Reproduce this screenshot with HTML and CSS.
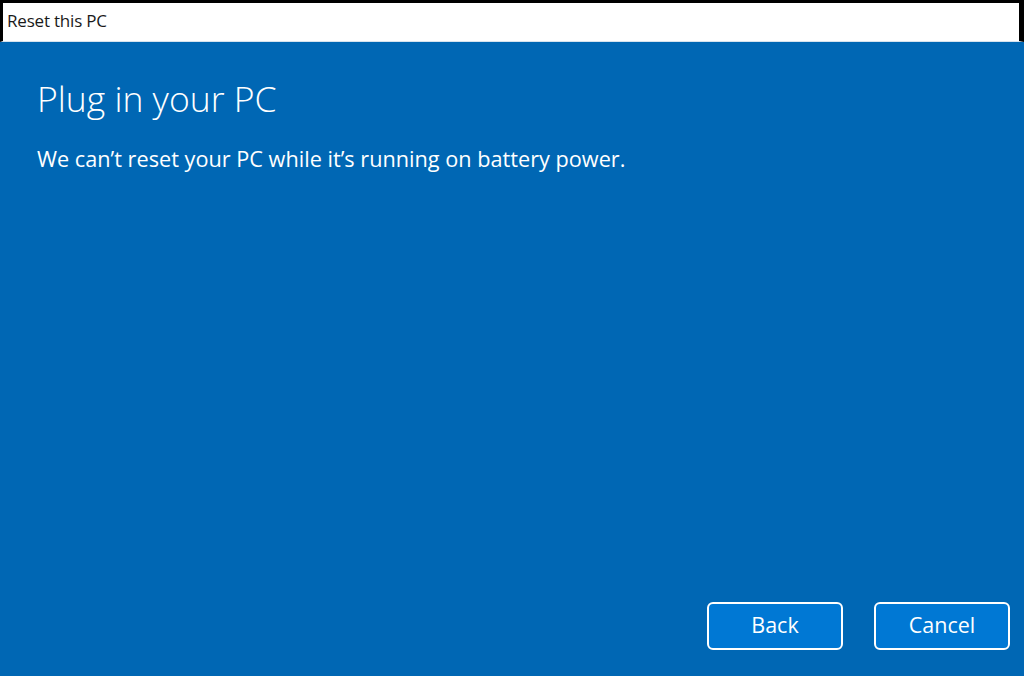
FILE: index.html
```html
<!DOCTYPE html>
<html lang="en">
<head>
<meta charset="utf-8">
<title>Reset this PC</title>
<link rel="stylesheet" href="styles.css">
</head>
<body>
<div class="window">
  <div class="titlebar"><span class="title-text">Reset this PC</span></div>
  <div class="content">
    <h1 class="heading">Plug in your PC</h1>
    <p class="message">We can’t reset your PC while it’s running on battery power.</p>
    <div class="spacer"></div>
    <div class="actions">
      <button class="btn">Back</button>
      <button class="btn">Cancel</button>
    </div>
  </div>
</div>
</body>
</html>
```
FILE: styles.css
```css
html, body {
  margin: 0;
  padding: 0;
  width: 1024px;
  height: 676px;
  overflow: hidden;
  background: #0067b4;
  font-family: "Open Sans", "Noto Sans", "Liberation Sans", sans-serif;
}
.window {
  display: flex;
  flex-direction: column;
  height: 676px;
}
.titlebar {
  height: 38px;
  background: #ffffff;
  border-top: 3px solid #000;
  border-left: 3px solid #000;
  border-right: 5px solid #000;
  border-bottom: 1px solid #d6e3ee;
  display: flex;
  align-items: center;
  padding-left: 4px;
  box-sizing: content-box;
}
.title-text {
  font-size: 17px;
  color: #1a1a1a;
  margin-top: -4px;
  letter-spacing: -0.2px;
}
.content {
  flex: 1;
  display: flex;
  flex-direction: column;
  padding: 0 14px 26px 37px;
  color: #ffffff;
}
.heading {
  margin: 32px 0 0 0;
  font-size: 35.5px;
  font-weight: 300;
  line-height: 48px;
}
.message {
  margin: 22px 0 0 0;
  font-size: 21.7px;
  font-weight: 400;
  line-height: 30px;
}
.spacer { flex: 1; }
.actions {
  display: flex;
  justify-content: flex-end;
  gap: 31px;
}
.btn {
  width: 136px;
  height: 48px;
  background: #0078d4;
  color: #ffffff;
  border: 2px solid #ffffff;
  border-radius: 6px;
  font-family: "Open Sans", "Noto Sans", sans-serif;
  font-size: 21.5px;
  line-height: 1;
  padding: 0 0 2px 0;
  cursor: default;
}
```
